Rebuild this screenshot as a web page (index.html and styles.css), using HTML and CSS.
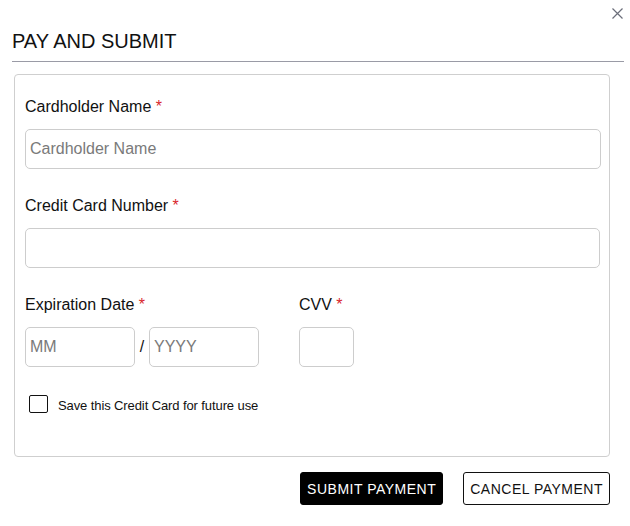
FILE: index.html
```html
<!DOCTYPE html>
<html>
<head>
<meta charset="utf-8">
<link rel="stylesheet" href="styles.css">
</head>
<body>
<div class="modal">
  <div class="topbar">
    <button class="close" aria-label="Close">
      <svg width="11" height="11" viewBox="0 0 11 11"><path d="M0.5 0.5L10.5 10.5M10.5 0.5L0.5 10.5" stroke="#6b6e7a" stroke-width="1.2" fill="none"/></svg>
    </button>
  </div>
  <h1 class="title">PAY AND SUBMIT</h1>
  <div class="panel">
    <div class="field">
      <label class="label">Cardholder Name <span class="req">*</span></label>
      <input class="input" type="text" placeholder="Cardholder Name">
    </div>
    <div class="field">
      <label class="label">Credit Card Number <span class="req">*</span></label>
      <input class="input input-num" type="text">
    </div>
    <div class="row">
      <div class="field">
        <label class="label">Expiration Date <span class="req">*</span></label>
        <div class="exp">
          <input class="input small" type="text" placeholder="MM">
          <span class="slash">/</span>
          <input class="input small" type="text" placeholder="YYYY">
        </div>
      </div>
      <div class="field cvv-field">
        <label class="label">CVV <span class="req">*</span></label>
        <input class="input cvv" type="text">
      </div>
    </div>
    <label class="check">
      <span class="box"></span>
      <span class="check-text">Save this Credit Card for future use</span>
    </label>
  </div>
  <div class="actions">
    <button class="btn btn-primary">SUBMIT PAYMENT</button>
    <button class="btn btn-secondary">CANCEL PAYMENT</button>
  </div>
</div>
</body>
</html>
```
FILE: styles.css
```css
* { box-sizing: border-box; }
html, body { margin: 0; padding: 0; background: #fff; }
body { font-family: "Liberation Sans", Arial, sans-serif; color: #111; }
.modal { width: 630px; height: 526px; position: relative; }
.topbar { height: 30px; display: flex; justify-content: flex-end; padding: 8px 6px 0 0; }
.close { border: 0; background: none; padding: 0; width: 12px; height: 12px; display: flex; cursor: pointer; }
.title {
  margin: 0 6px 0 12px;
  font-size: 20px;
  font-weight: normal;
  line-height: 23px;
  padding-bottom: 8px;
  border-bottom: 1px solid #9a9ba6;
  color: #111;
}
.panel {
  margin: 12px 0 0 14px;
  width: 596px;
  height: 383px;
  border: 1px solid #cfcfcf;
  border-radius: 4px;
  padding: 21px 7px 0 10px;
  display: flex;
  flex-direction: column;
}
.field { display: flex; flex-direction: column; margin-bottom: 26px; }
.label { font-size: 16px; line-height: 22px; margin-bottom: 11px; color: #111; }
.req { color: #d9262c; }
.input {
  height: 40px;
  border: 1px solid #cdcdcd;
  border-radius: 5px;
  font-family: "Liberation Sans", Arial, sans-serif;
  font-size: 16px;
  padding: 0 4px;
  width: 576px;
  outline: none;
  color: #111;
}
.input::placeholder { color: #7a7a7a; }
.input-num { width: 575px; }
.row { display: flex; }
.exp { display: flex; align-items: center; }
.small { width: 110px; }
.slash { font-size: 16px; width: 14px; text-align: center; color: #111; }
.cvv-field { margin-left: 40px; }
.cvv { width: 55px; }
.check { display: flex; align-items: center; margin: 2px 0 0 4px; }
.box { width: 19px; height: 18px; border: 1px solid #111; border-radius: 2px; }
.check-text { font-size: 13px; letter-spacing: -0.1px; margin-left: 10px; padding-top: 2px; color: #111; }
.actions { display: flex; justify-content: flex-end; gap: 20px; margin: 15px 20px 0 0; }
.btn {
  height: 33px;
  font-family: "Liberation Sans", Arial, sans-serif;
  font-size: 14px;
  letter-spacing: 0.5px;
  padding: 0 6px;
  border-radius: 3px;
  cursor: pointer;
}
.btn-primary { background: #000; color: #fff; border: 1px solid #000; }
.btn-secondary { background: #fff; color: #111; border: 1px solid #111; }
```
